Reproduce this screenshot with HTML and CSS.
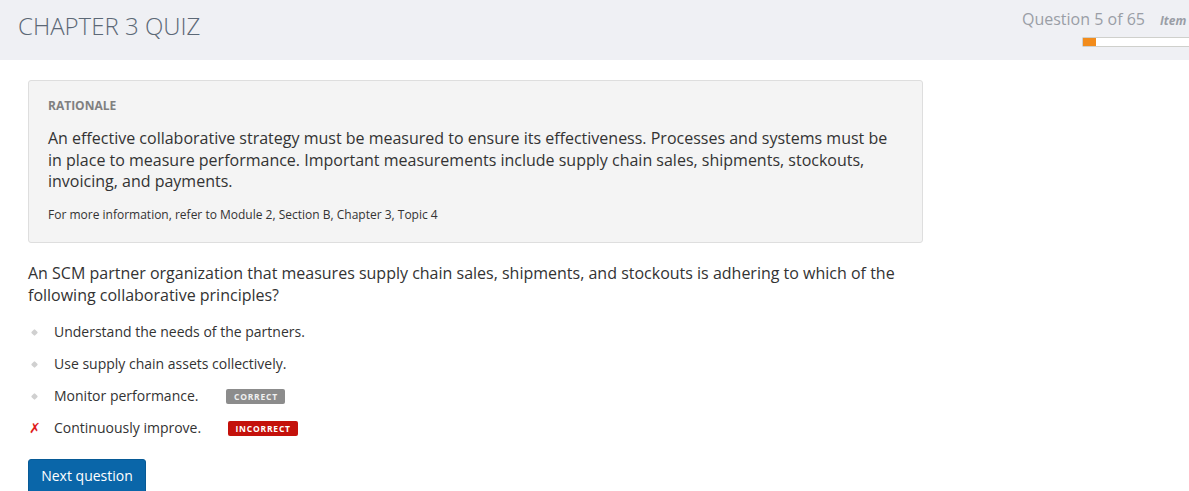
FILE: index.html
```html
<!DOCTYPE html>
<html>
<head>
<meta charset="utf-8">
<link rel="stylesheet" href="styles.css">
</head>
<body>
<header class="topbar">
  <h1 class="title">CHAPTER 3 QUIZ</h1>
  <div class="progress-area">
    <div class="progress-text">
      <span class="qcount">Question 5 of 65</span>
      <span class="item">Item</span>
    </div>
    <div class="progress-bar"><div class="progress-fill" style="width:13px"></div></div>
  </div>
</header>
<main class="content">
  <section class="rationale">
    <div class="rationale-label">RATIONALE</div>
    <p class="rationale-text">An effective collaborative strategy must be measured to ensure its effectiveness. Processes and systems must be in place to measure performance. Important measurements include supply chain sales, shipments, stockouts, invoicing, and payments.</p>
    <p class="rationale-ref">For more information, refer to Module 2, Section B, Chapter 3, Topic 4</p>
  </section>
  <p class="question">An SCM partner organization that measures supply chain sales, shipments, and stockouts is adhering to which of the following collaborative principles?</p>
  <ul class="options">
    <li class="option"><span class="marker dot"></span><span class="opt-text">Understand the needs of the partners.</span></li>
    <li class="option"><span class="marker dot"></span><span class="opt-text">Use supply chain assets collectively.</span></li>
    <li class="option"><span class="marker dot"></span><span class="opt-text">Monitor performance.</span><span class="badge badge-correct">CORRECT</span></li>
    <li class="option"><span class="marker cross">&#x2717;</span><span class="opt-text">Continuously improve.</span><span class="badge badge-incorrect">INCORRECT</span></li>
  </ul>
  <button class="next-btn">Next question</button>
</main>
</body>
</html>
```

FILE: styles.css
```css
* { box-sizing: border-box; }
html, body { margin: 0; padding: 0; }
body {
  font-family: "Open Sans", "Liberation Sans", sans-serif;
  color: #333;
  background: #fff;
  overflow: hidden;
  width: 1189px;
  height: 491px;
}
.topbar {
  height: 60px;
  background: #eff0f4;
  display: flex;
  justify-content: space-between;
  align-items: flex-start;
  padding-left: 18px;
}
.title {
  margin: 10px 0 0 0;
  font-weight: 300;
  font-size: 24px;
  line-height: 32px;
  color: #5c6876;
  letter-spacing: 0;
}
.progress-area {
  display: flex;
  flex-direction: column;
  align-items: flex-start;
  width: 167px;
  padding-top: 8px;
  overflow: hidden;
}
.progress-text {
  display: flex;
  align-items: baseline;
  white-space: nowrap;
}
.qcount {
  font-weight: 400;
  font-size: 16px;
  line-height: 22px;
  color: #9a9ea6;
}
.item {
  margin-left: 15px;
  font-style: italic;
  font-weight: 700;
  font-size: 12px;
  color: #9a9ea6;
}
.progress-bar {
  margin-top: 7px;
  margin-left: 60px;
  width: 120px;
  height: 10px;
  background: #fff;
  border: 1px solid #cfd0cc;
  border-radius: 1px;
}
.progress-fill {
  height: 100%;
  background: #f28c1c;
}
.content {
  padding: 20px 28px 0 28px;
  width: 895px;
  box-sizing: content-box;
}
.rationale {
  background: #f4f4f4;
  border: 1px solid #dedede;
  border-radius: 3px;
  padding: 16px 19px 16px 19px;
  height: 163px;
}
.rationale-label {
  font-size: 12px;
  font-weight: 700;
  color: #808080;
  line-height: 18px;
}
.rationale-text {
  margin: 13px 0 0 0;
  font-size: 16px;
  line-height: 21.5px;
  color: #333;
}
.rationale-ref {
  margin: 13px 0 0 0;
  font-size: 12px;
  line-height: 18px;
  color: #333;
}
.question {
  margin: 19px 0 0 0;
  font-size: 16px;
  line-height: 22px;
  color: #333;
}
.options {
  list-style: none;
  margin: 10px 0 0 0;
  padding: 0;
}
.option {
  display: flex;
  align-items: center;
  height: 32px;
  font-size: 14px;
  color: #333;
}
.marker {
  width: 26px;
  display: flex;
  align-items: center;
  justify-content: flex-start;
}
.dot {
  height: 8px;
}
.dot::before {
  content: "";
  display: block;
  width: 5px;
  height: 5px;
  margin-left: 4px;
  background: #d0d0d0;
  transform: rotate(45deg);
  border-radius: 1px;
}
.cross {
  color: #e01b1b;
  font-size: 14px;
  font-weight: 700;
  font-style: italic;
  font-family: "DejaVu Sans", sans-serif;
  padding-left: 1px;
}
.opt-text { line-height: 20px; }
.badge {
  display: inline-block;
  font-size: 8.5px;
  font-weight: 700;
  letter-spacing: 0.8px;
  color: #fff;
  line-height: 15px;
  height: 15px;
  border-radius: 2px;
  text-align: center;
}
.badge-correct {
  margin-left: 28px;
  width: 59px;
  background: #8c8c8c;
  color: #f0f0f0;
}
.badge-incorrect {
  margin-left: 27px;
  width: 70px;
  background: #c4110b;
}
.next-btn {
  margin-top: 15px;
  background: #0a66a9;
  color: #fff;
  border: 1px solid #075a96;
  border-radius: 3px;
  font-family: "Open Sans", "Liberation Sans", sans-serif;
  font-size: 14px;
  font-weight: 500;
  height: 36px;
  width: 118px;
  padding: 0 0 3px 0;
  text-align: center;
}
```
